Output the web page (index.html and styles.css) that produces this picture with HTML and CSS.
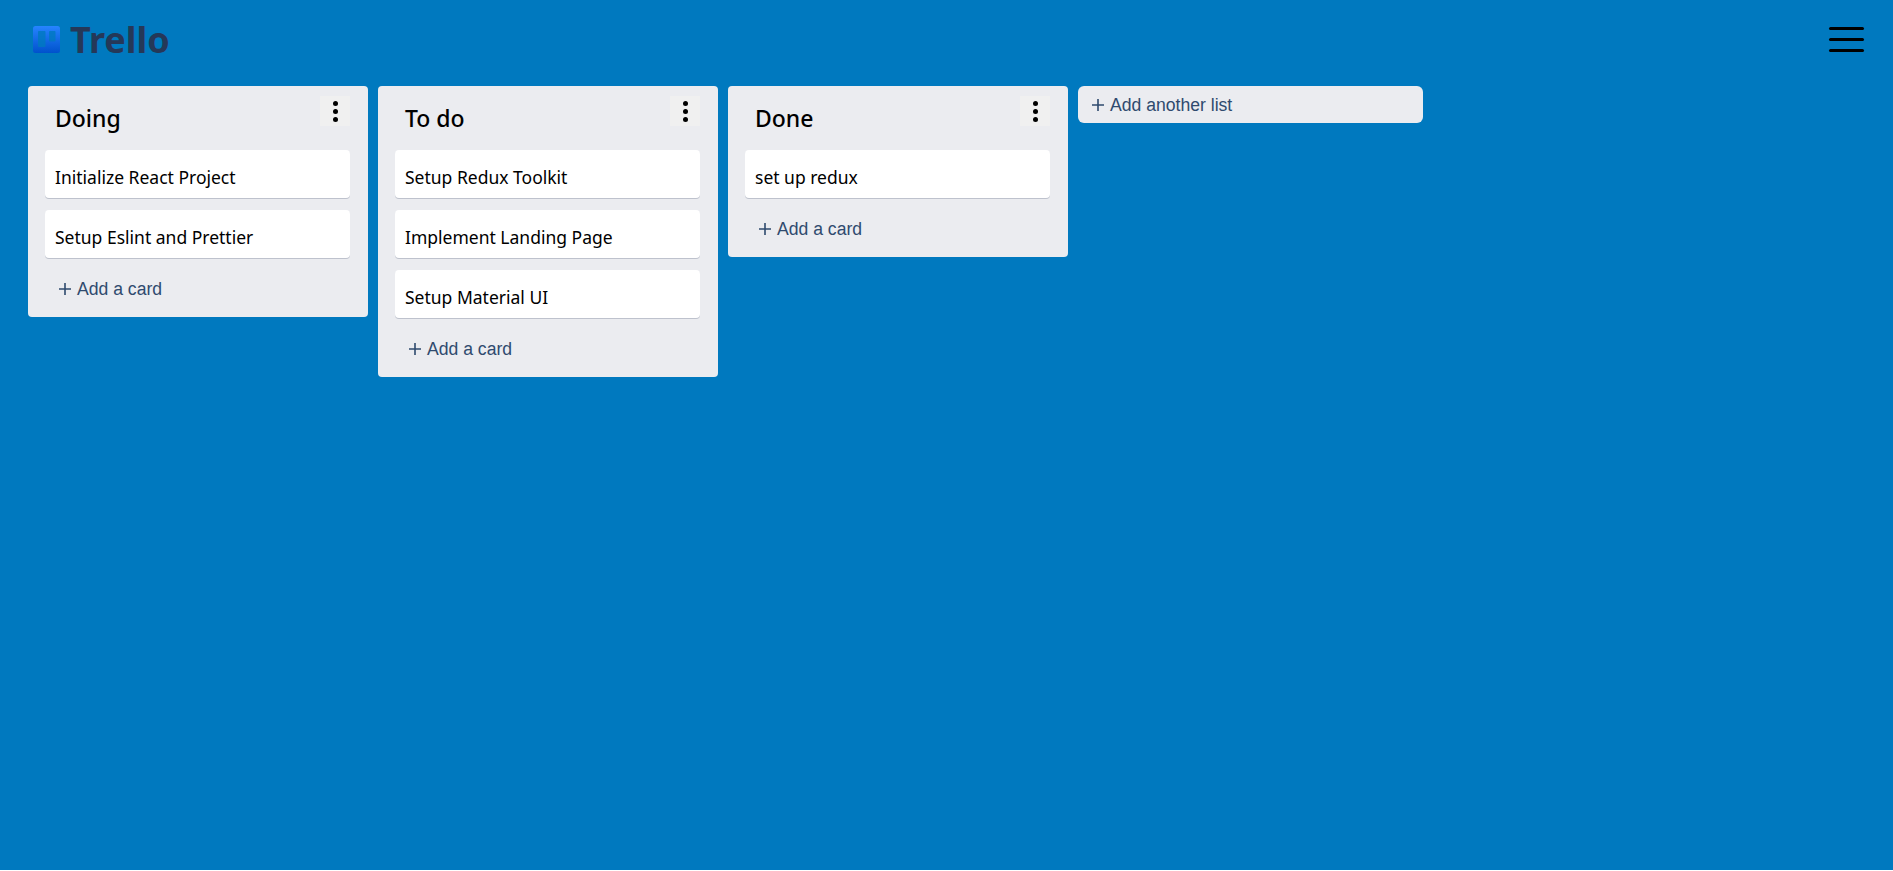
FILE: index.html
```html
<!DOCTYPE html>
<html lang="en">
<head>
<meta charset="utf-8">
<title>Trello</title>
<link rel="stylesheet" href="styles.css">
</head>
<body>
<div class="app">
  <header class="topbar">
    <div class="logo">
      <svg class="logo-icon" width="27" height="27" viewBox="0 0 27 27">
        <defs><linearGradient id="lg" x1="0" y1="1" x2="0" y2="0"><stop offset="0" stop-color="#0052cc"/><stop offset="1" stop-color="#2684ff"/></linearGradient></defs>
        <rect width="27" height="27" rx="2.5" fill="url(#lg)"/>
        <rect x="5" y="5" width="7.5" height="16" rx="0.8" fill="#0079bf" opacity="0.8"/>
        <rect x="16" y="5" width="6.5" height="10.5" rx="0.8" fill="#0079bf" opacity="0.8"/>
      </svg>
      <span class="logo-text">Trello</span>
    </div>
    <div class="menu" aria-label="Menu"><span></span><span></span><span></span></div>
  </header>
  <main class="board">
    <section class="list">
      <div class="list-head"><h2>Doing</h2><div class="dots"><i></i><i></i><i></i></div></div>
      <div class="card">Initialize React Project</div>
      <div class="card">Setup Eslint and Prettier</div>
      <div class="add-card"><svg class="plus" width="14" height="14" viewBox="0 0 14 14"><path d="M7 1v12M1 7h12"/></svg>Add a card</div>
    </section>
    <section class="list">
      <div class="list-head"><h2>To do</h2><div class="dots"><i></i><i></i><i></i></div></div>
      <div class="card">Setup Redux Toolkit</div>
      <div class="card">Implement Landing Page</div>
      <div class="card">Setup Material UI</div>
      <div class="add-card"><svg class="plus" width="14" height="14" viewBox="0 0 14 14"><path d="M7 1v12M1 7h12"/></svg>Add a card</div>
    </section>
    <section class="list">
      <div class="list-head"><h2>Done</h2><div class="dots"><i></i><i></i><i></i></div></div>
      <div class="card">set up redux</div>
      <div class="add-card"><svg class="plus" width="14" height="14" viewBox="0 0 14 14"><path d="M7 1v12M1 7h12"/></svg>Add a card</div>
    </section>
    <div class="add-list"><svg class="plus" width="14" height="14" viewBox="0 0 14 14"><path d="M7 1v12M1 7h12"/></svg>Add another list</div>
  </main>
</div>
</body>
</html>
```
FILE: styles.css
```css
* { box-sizing: border-box; }
html, body { margin: 0; height: 100%; }
body { background: #fff; font-family: "Noto Sans", "Open Sans", sans-serif; overflow: hidden; }
.app { height: 870px; background: #0079bf; display: flex; flex-direction: column; }
.topbar { height: 86px; flex: none; display: flex; justify-content: space-between; padding: 26px 29px 0 33px; }
.logo { display: flex; align-items: flex-start; gap: 10px; }
.logo-icon { display: block; }
.logo-text { font-family: "Noto Sans", sans-serif; font-weight: 700; font-size: 36px; line-height: 27px; color: #253858; }
.menu { width: 35px; height: 28px; margin-top: 1px; display: flex; flex-direction: column; gap: 8px; }
.menu span { display: block; height: 3px; border-radius: 2px; background: #000; }
.board { display: flex; align-items: flex-start; gap: 10px; padding-left: 28px; }
.list { width: 340px; background: #ebecf0; border-radius: 4px; padding: 10px 18px 0 17px; display: flex; flex-direction: column; }
.list-head { height: 54px; display: flex; justify-content: space-between; align-items: flex-start; padding-left: 10px; }
.list-head h2 { margin: 0; font-size: 23px; font-weight: 500; line-height: 32px; padding-top: 6px; color: #000; }
.dots { width: 30px; height: 30px; background: #f0f0f0; display: flex; flex-direction: column; align-items: center; justify-content: center; gap: 3px; }
.dots i { width: 5px; height: 5px; border-radius: 50%; background: #000; display: block; }
.card { height: 48px; background: #fff; border-radius: 4px; box-shadow: 0 1px 0 rgba(9,30,66,.2); margin-bottom: 12px; padding: 0 10px; font-size: 17.5px; line-height: 54px; color: #000; display: block; }
.add-card { height: 47px; padding: 9px 13px 0; font-family: "Liberation Sans", Arial, sans-serif; font-size: 17.6px; color: #2f4a6e; display: flex; align-items: flex-start; line-height: 21px; }
.plus { flex: none; margin: 3px 5px 0 0; }
.plus path { stroke: #2f4a6e; stroke-width: 1.6; fill: none; }
.add-list { width: 345px; height: 37px; background: #ebecf0; border-radius: 6px; padding: 9px 13px 0; font-family: "Liberation Sans", Arial, sans-serif; font-size: 17.6px; line-height: 21px; color: #2f4a6e; display: flex; align-items: flex-start; }
```
